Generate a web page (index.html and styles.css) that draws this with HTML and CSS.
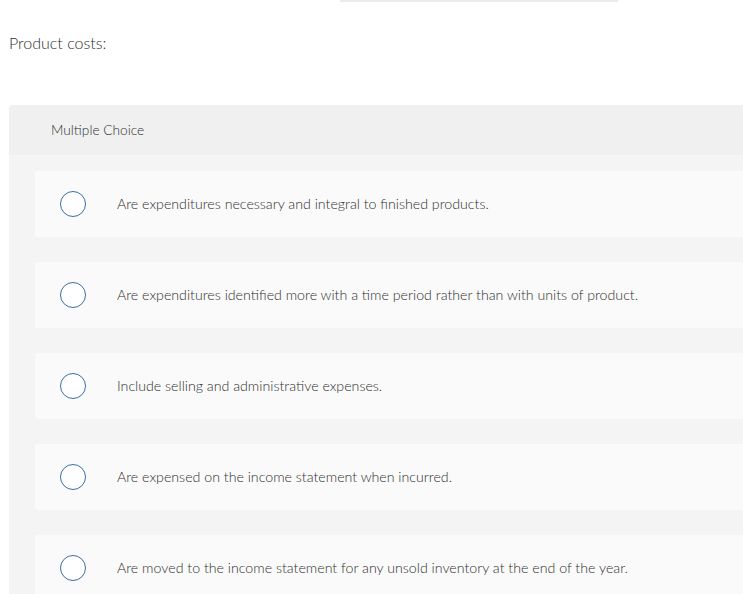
FILE: index.html
```html
<!DOCTYPE html>
<html>
<head>
<meta charset="utf-8">
<link rel="stylesheet" href="styles.css">
</head>
<body>
<div class="topbar-wrap"><div class="topbar"></div></div>
<p class="question">Product costs:</p>
<div class="panel">
  <div class="panel-head">Multiple Choice</div>
  <div class="panel-body">
    <div class="option"><span class="radio"></span><span class="label">Are expenditures necessary and integral to finished products.</span></div>
    <div class="option"><span class="radio"></span><span class="label">Are expenditures identified more with a time period rather than with units of product.</span></div>
    <div class="option"><span class="radio"></span><span class="label">Include selling and administrative expenses.</span></div>
    <div class="option"><span class="radio"></span><span class="label">Are expensed on the income statement when incurred.</span></div>
    <div class="option"><span class="radio"></span><span class="label">Are moved to the income statement for any unsold inventory at the end of the year.</span></div>
  </div>
</div>
</body>
</html>
```
FILE: styles.css
```css
html, body {
  margin: 0;
  padding: 0;
  background: #ffffff;
  font-family: Lato, "Open Sans", Arial, sans-serif;
  font-weight: 300;
  color: #333333;
  overflow: hidden;
}
.topbar-wrap {
  display: flex;
  padding-left: 340px;
}
.topbar {
  width: 278px;
  height: 2px;
  background: #ebebeb;
}
.question {
  margin: 0;
  padding: 31px 0 0 9px;
  height: 70px;
  box-sizing: border-box;
  font-size: 16px;
  line-height: 20px;
  color: #2f2f2f;
}
.panel {
  margin: 33px 0 0 9px;
}
.panel-head {
  height: 50px;
  box-sizing: border-box;
  background: #f0f0f0;
  border-top-left-radius: 3px;
  padding: 15px 0 0 42px;
  font-size: 13.7px;
  line-height: 20px;
  color: #2f2f2f;
}
.panel-body {
  background: #f4f4f4;
  padding: 16px 0 0 26px;
  display: flex;
  flex-direction: column;
  gap: 25px;
}
.option {
  height: 66px;
  background: #fafafa;
  border-top-left-radius: 3px;
  border-bottom-left-radius: 3px;
  display: flex;
  align-items: center;
  padding-left: 25px;
}
.radio {
  width: 24px;
  height: 24px;
  border: 1.5px solid #3a6ea5;
  border-radius: 50%;
  background: #ffffff;
  flex: none;
}
.label {
  margin-left: 31px;
  font-size: 14.2px;
  line-height: 18px;
  color: #2f2f2f;
}
```
